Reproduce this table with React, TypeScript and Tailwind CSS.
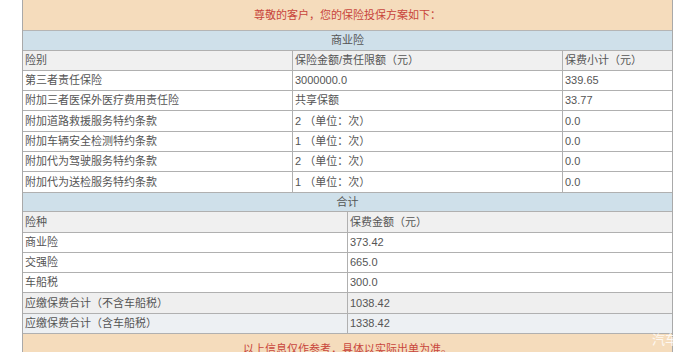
import React from "react";

const font = { fontFamily: '"Liberation Sans", "Noto Sans CJK SC", sans-serif' };

const bizRows = [
  { name: "第三者责任保险", amount: "3000000.0", fee: "339.65", h: "h-[20px]" },
  { name: "附加三者医保外医疗费用责任险", amount: "共享保额", fee: "33.77", h: "h-[20px]" },
  { name: "附加道路救援服务特约条款", amount: "2 （单位：次）", fee: "0.0", h: "h-[21px]" },
  { name: "附加车辆安全检测特约条款", amount: "1 （单位：次）", fee: "0.0", h: "h-[20px]" },
  { name: "附加代为驾驶服务特约条款", amount: "2 （单位：次）", fee: "0.0", h: "h-[20px]" },
  { name: "附加代为送检服务特约条款", amount: "1 （单位：次）", fee: "0.0", h: "h-[21px]" },
];

const totalRows = [
  { name: "商业险", value: "373.42", bg: "bg-white", h: "h-[20px]" },
  { name: "交强险", value: "665.0", bg: "bg-white", h: "h-[20px]" },
  { name: "车船税", value: "300.0", bg: "bg-white", h: "h-[20px]" },
  { name: "应缴保费合计（不含车船税）", value: "1038.42", bg: "bg-[#efefef]", h: "h-[21px]" },
  { name: "应缴保费合计（含车船税）", value: "1338.42", bg: "bg-[#edf0f3]", h: "h-[20px]" },
];

const App: React.FC = () => {
  return (
    <div className="w-[700px] h-[352px] overflow-hidden bg-white text-[11px] text-[#555]" style={font}>
      <div className="ml-[22px] w-[651px] border-x border-[#a9a9a9]">
        <div className="h-[31px] flex items-center justify-center bg-[#f5dcbc] border-b border-[#b5b5b5] text-[#c8453b]">
          尊敬的客户，您的保险投保方案如下：
        </div>
        <div className="h-[20px] flex items-center justify-center bg-[#cfe0ea] border-b border-[#b0b0b0]">
          商业险
        </div>
        <div className="h-[20px] grid grid-cols-[270px_270px_1fr] bg-[#f0f0f0] border-b border-[#b0b0b0]">
          <div className="pl-[2px] flex items-center border-r border-[#b0b0b0]">险别</div>
          <div className="pl-[2px] flex items-center border-r border-[#b0b0b0]">保险金额/责任限额（元）</div>
          <div className="pl-[2px] flex items-center">保费小计（元）</div>
        </div>
        {bizRows.map((r) => (
          <div key={r.name} className={`${r.h} grid grid-cols-[270px_270px_1fr] bg-white border-b border-[#b0b0b0]`}>
            <div className="pl-[2px] flex items-center border-r border-[#b0b0b0]">{r.name}</div>
            <div className="pl-[2px] flex items-center border-r border-[#b0b0b0]">{r.amount}</div>
            <div className="pl-[2px] flex items-center">{r.fee}</div>
          </div>
        ))}
        <div className="h-[19px] flex items-center justify-center bg-[#cfe0ea] border-b border-[#b0b0b0]">
          合计
        </div>
        <div className="h-[21px] grid grid-cols-[325px_1fr] bg-[#f0f0f0] border-b border-[#b0b0b0]">
          <div className="pl-[2px] flex items-center border-r border-[#b0b0b0]">险种</div>
          <div className="pl-[2px] flex items-center">保费金额（元）</div>
        </div>
        {totalRows.map((r) => (
          <div key={r.name} className={`${r.h} grid grid-cols-[325px_1fr] ${r.bg} border-b border-[#b0b0b0]`}>
            <div className="pl-[2px] flex items-center border-r border-[#b0b0b0]">{r.name}</div>
            <div className="pl-[2px] flex items-center">{r.value}</div>
          </div>
        ))}
        <div className="relative h-[31px] flex items-center justify-center bg-[#f5dcbc] text-[#c8453b]">
          以上信息仅作参考，具体以实际出单为准。
          <span className="absolute right-[-6px] top-[-4px] text-[13px] text-white/80">汽车</span>
        </div>
      </div>
    </div>
  );
};

export default App;
